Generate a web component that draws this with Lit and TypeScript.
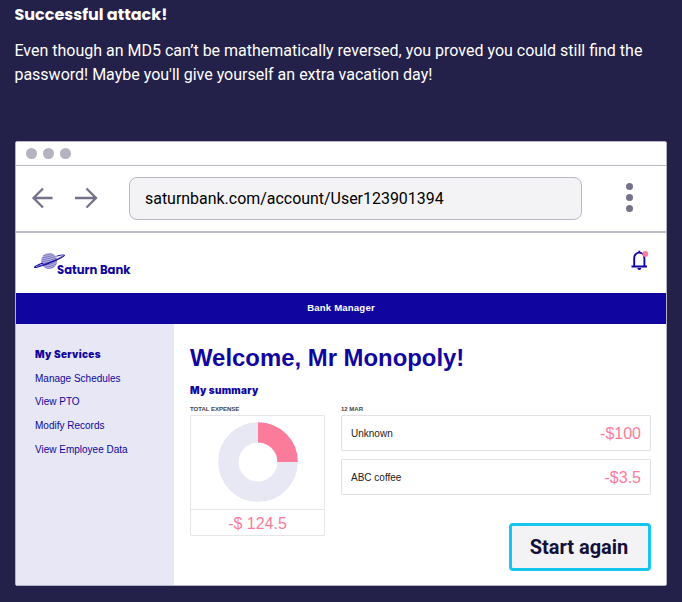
import { LitElement, html, css, svg } from "lit";
import { customElement } from "lit/decorators.js";

const services = ["Manage Schedules", "View PTO", "Modify Records", "View Employee Data"];
const transactions = [
  { name: "Unknown", amount: "-$100" },
  { name: "ABC coffee", amount: "-$3.5" },
];

@customElement("saturn-logo")
class SaturnLogo extends LitElement {
  static styles = css`
    :host { display: block; }
    svg { display: block; }
    .name { font: 700 11.6px Poppins, Lato, sans-serif; fill: #10069f; }
  `;
  render() {
    const stripes = [3, 5, 7, 9, 11, 13, 15, 17, 19];
    return html`<svg width="100" height="28" viewBox="0 0 100 28">
      <defs><clipPath id="globe"><circle cx="15.2" cy="9" r="8" /></clipPath></defs>
      <circle cx="15.2" cy="9" r="8" fill="#b9b4df" />
      <g clip-path="url(#globe)" stroke="#6c66c4" stroke-width=".8" fill="none">
        ${stripes.map((y) => svg`<path d=${`M7 ${y + 1} Q16 ${y} 25 ${y - 4}`} />`)}
      </g>
      <path d="M9 11 Q1.5 13.5 .5 15.3 Q2 16.2 15.5 11 Q30 5.5 30.5 3.2 Q30 2.2 22.5 4.2" fill="none" stroke="#10069f" stroke-width="1.1" />
      <path d="M3 14.3 Q10 12.7 17 9.6 Q24 7 28.5 4" fill="none" stroke="#10069f" stroke-width=".6" />
      <text class="name" x="23" y="21.5" textLength="73.5" lengthAdjust="spacingAndGlyphs">Saturn Bank</text>
    </svg>`;
  }
}

@customElement("app-root")
class AppRoot extends LitElement {
  static styles = css`
    * { box-sizing: border-box; margin: 0; }
    :host {
      display: block; height: 602px; padding: 3px 15px 0; overflow: hidden;
      background: #23204a; color: #fff; font-family: Roboto, sans-serif;
    }
    svg { display: block; }
    .title { font: 700 16px/24px Poppins, Inter, sans-serif; height: 24px; margin-left: -.5px; }
    .lead { font-size: 16px; line-height: 24px; margin: 12px 0 0 -.6px; height: 48px; white-space: nowrap; }
    .window {
      margin-top: 54px; width: 652px; height: 445px; border: 1px solid #b5b2c1; border-radius: 2px;
      background: #fff; overflow: hidden; display: flex; flex-direction: column;
    }
    .dots { height: 24px; flex: none; border-bottom: 1px solid #b9b7c4; display: flex; align-items: center; gap: 5.6px; padding-left: 10.3px; }
    .dot { width: 11.2px; height: 11.2px; border-radius: 50%; background: #b5b2c1; }
    .toolbar { height: 67px; flex: none; border-bottom: 2px solid #bebcc8; display: flex; align-items: center; padding: 0 33px 0 15.5px; }
    .arrow { margin: 0 0 1px -.5px; }
    .arrow + .arrow { margin-left: 20.5px; }
    .address {
      margin-left: 31.5px; width: 453px; height: 43.5px; border: 1px solid #b9b7c4; border-radius: 8px;
      background: #f3f3f6; color: #000; font-size: 15.95px; line-height: 41.5px; padding-left: 15px;
    }
    .more { margin-left: auto; display: grid; gap: 4px; padding-bottom: 2px; }
    .more .pip { width: 7px; height: 7px; border-radius: 50%; background: #75718a; }
    .brand { height: 60px; flex: none; display: flex; justify-content: space-between; padding: 19px 16px 0 18px; }
    .bell { margin-top: -2px; }
    .role {
      height: 31px; flex: none; background: #10069f; text-align: center;
      font: 700 9.6px/29px "Liberation Sans", sans-serif; letter-spacing: .17px;
    }
    .body { flex: 1; display: flex; color: #10069f; font-family: "Liberation Sans", sans-serif; min-height: 0; }
    .side { width: 158px; background: #e7e7f5; padding: 17.5px 0 0 19px; font-size: 10px; line-height: 23.9px; }
    .side .head { font: 900 10px/24px Inter, sans-serif; letter-spacing: .3px; margin-bottom: 1px; }
    .main { flex: 1; padding: 17px 15px 0 16px; display: flex; flex-direction: column; }
    .welcome { font-size: 23.9px; line-height: 34px; font-weight: 700; white-space: nowrap; }
    .summary { font: 900 10px/16px Inter, sans-serif; letter-spacing: .25px; margin-top: 7px; }
    .cards { display: flex; gap: 16px; margin-top: 7px; }
    .label { font-size: 6px; line-height: 9px; height: 9px; font-weight: 700; color: #444; margin-bottom: 1px; }
    .expense { width: 135px; height: 121px; border: 1px solid #e5e5ea; border-radius: 1px; }
    .chart { height: 93.5px; border-bottom: 1px solid #e5e5ea; display: flex; justify-content: center; padding: 5px 0 0 0; }
    .total { color: #fb7b9a; font-size: 16px; line-height: 28px; text-align: center; }
    .list { flex: 1; }
    .row {
      height: 36px; border: 1px solid #e2e2e6; border-radius: 1px; display: flex; align-items: center;
      justify-content: space-between; padding: 0 9px; font-size: 10px; color: #222;
    }
    .row + .row { margin-top: 8px; }
    .row .amount { font-size: 16px; color: #fb7b9a; padding-top: 1px; }
    .again {
      position: absolute; left: 509px; top: 522.5px; width: 142px; height: 48.5px;
      border: 3px solid #18c5ec; border-radius: 4px; background: #f3f3f6; color: #13113a;
      font: 700 20px/42px Roboto, sans-serif; padding: 0 2px 0 0; text-align: center;
    }
  `;

  render() {
    return html`
      <h1 class="title">Successful attack!</h1>
      <p class="lead">Even though an MD5 can’t be mathematically reversed, you proved you could still find the<br />password! Maybe you'll give yourself an extra vacation day!</p>
      <section class="window">
        <div class="dots"><i class="dot"></i><i class="dot"></i><i class="dot"></i></div>
        <div class="toolbar">
          <svg class="arrow" width="23" height="22" viewBox="0 0 23 22"><path d="M12 1.5 L2.5 11 L12 20.5 M2 11 H21.5" fill="none" stroke="#75718a" stroke-width="2.3" /></svg>
          <svg class="arrow" width="23" height="22" viewBox="0 0 23 22"><path d="M11.5 1.5 L21 11 L11.5 20.5 M21 11 H0" fill="none" stroke="#75718a" stroke-width="2.3" /></svg>
          <div class="address">saturnbank.com/account/User123901394</div>
          <div class="more"><i class="pip"></i><i class="pip"></i><i class="pip"></i></div>
        </div>
        <div class="brand">
          <saturn-logo></saturn-logo>
          <svg class="bell" width="20" height="22" viewBox="0 0 20 22">
            <path d="M1.5 16.5 H17 M4.2 16 V8.2 C4.2 4.6 6.5 2.6 9.3 2.6 C12.1 2.6 14.4 4.6 14.4 8.2 V16 M9.3 .7 V3" fill="none" stroke="#10069f" stroke-width="1.9" />
            <path d="M7.2 18 H11.4 Q11 19.9 9.3 19.9 Q7.6 19.9 7.2 18Z" fill="#10069f" />
            <circle cx="15.3" cy="4" r="2.9" fill="#fb7b9a" />
          </svg>
        </div>
        <div class="role">Bank Manager</div>
        <div class="body">
          <nav class="side">
            <div class="head">My Services</div>
            ${services.map((s) => html`<div>${s}</div>`)}
          </nav>
          <main class="main">
            <h2 class="welcome">Welcome, Mr Monopoly!</h2>
            <h3 class="summary">My summary</h3>
            <div class="cards">
              <div>
                <div class="label">TOTAL EXPENSE</div>
                <div class="expense">
                  <div class="chart">
                    <svg width="80" height="82" viewBox="0 0 80 82">
                      <circle cx="40" cy="41" r="29.6" fill="none" stroke="#e8e8f5" stroke-width="20.4" />
                      <path d="M40 11.4 A29.6 29.6 0 0 1 69.6 41" fill="none" stroke="#fb7b9a" stroke-width="20.4" />
                    </svg>
                  </div>
                  <div class="total">-$ 124.5</div>
                </div>
              </div>
              <div class="list">
                <div class="label">12 MAR</div>
                ${transactions.map((t) => html`<div class="row"><span>${t.name}</span><span class="amount">${t.amount}</span></div>`)}
              </div>
            </div>
          </main>
        </div>
      </section>
      <button class="again">Start again</button>
    `;
  }
}
